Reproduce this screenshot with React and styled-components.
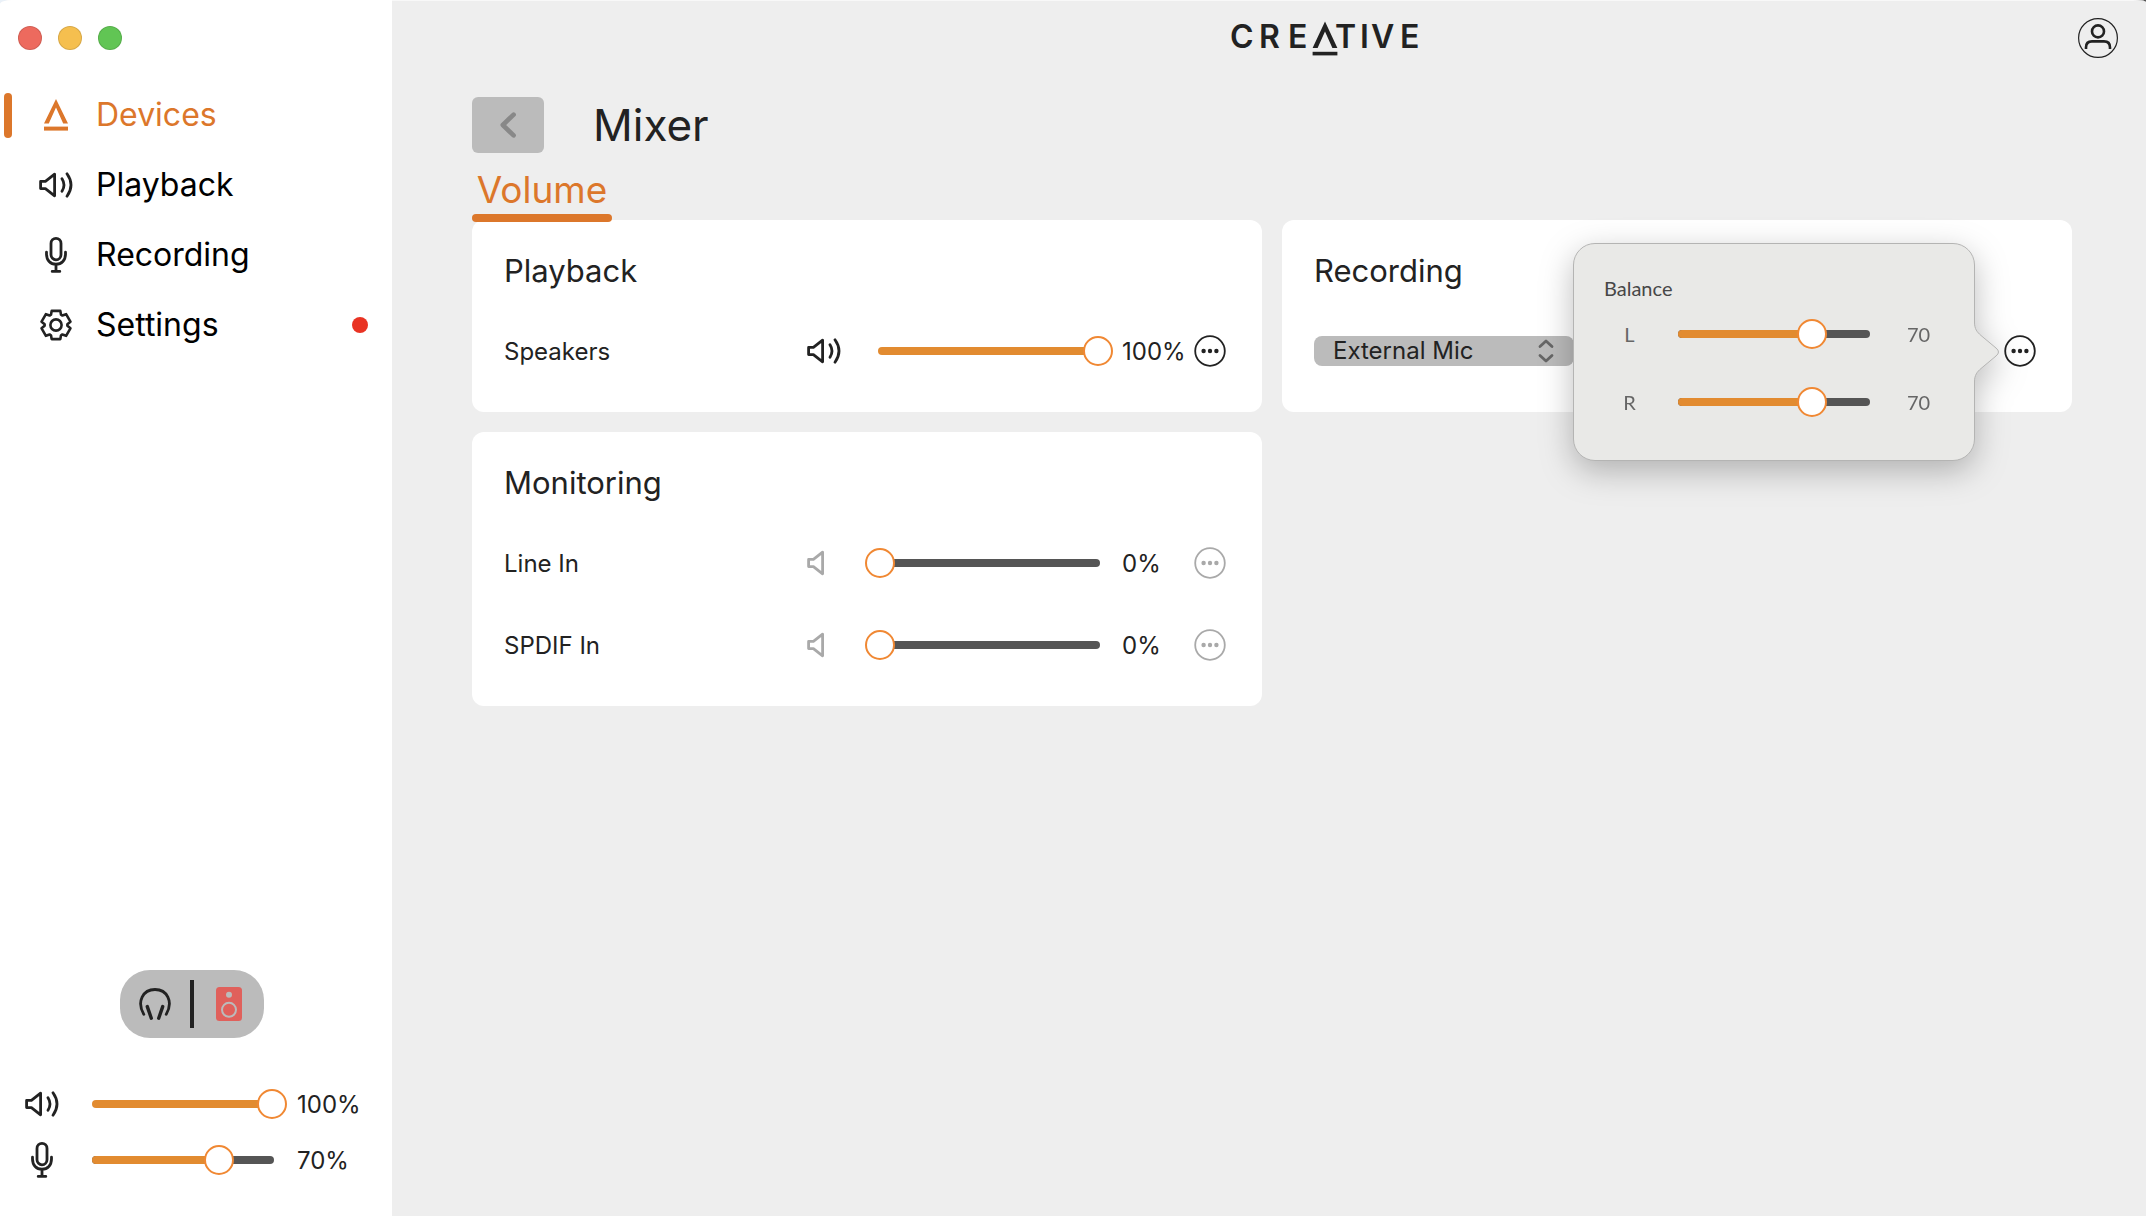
import React, { useState } from "react"
import styled, { createGlobalStyle } from "styled-components"

const ink = "#222222"
const accent = "#dc772b"
const muted = "#a9a9a9"

const GlobalStyle = createGlobalStyle`
  * {
    box-sizing: border-box;
  }
  body {
    margin: 0;
    background: linear-gradient(90deg, #eaf1f8 50%, #555555 50%);
    color: ${ink};
    font-family: Inter, "Liberation Sans", sans-serif;
  }
  button {
    font: inherit;
    color: inherit;
    border: 0;
    padding: 0;
    background: none;
    cursor: pointer;
  }
  svg {
    display: block;
  }
`

const Window = styled.div`
  display: flex;
  min-height: 100vh;
  overflow: hidden;
  border-radius: 12px 14px 0 0 / 4px 2px 0 0;
  background: #eeeeee;
`

/* sidebar */

const Sidebar = styled.aside`
  display: flex;
  flex-direction: column;
  flex: 0 0 392px;
  padding: 26px 0 28px;
  background: #ffffff;
`

const Lights = styled.div`
  display: flex;
  gap: 16px;
  padding-left: 18px;
`

const Light = styled.button`
  width: 24px;
  height: 24px;
  border: 1px solid rgba(0, 0, 0, 0.12);
  border-radius: 50%;
  background: ${(props) => props.$color};
`

const Nav = styled.nav`
  display: flex;
  flex-direction: column;
  margin-top: 30px;
`

const NavLink = styled.a`
  display: flex;
  align-items: center;
  height: 70px;
  padding: 0 24px 0 4px;
  color: ${(props) => (props.$active ? accent : "#000000")};
  font-size: 32px;
  line-height: 38px;
  text-decoration: none;

  &::before {
    content: "";
    width: 8px;
    height: 45px;
    border-radius: 4px;
    background: ${(props) => (props.$active ? accent : "transparent")};
  }
`

const NavIcon = styled.span`
  display: grid;
  place-items: center;
  width: 36px;
  margin: 0 22px 0 26px;
  color: ${(props) => (props.$active ? accent : ink)};
`

const Dot = styled.span`
  width: 16px;
  height: 16px;
  margin-left: auto;
  border-radius: 50%;
  background: #e93323;
`

const Output = styled.div`
  display: flex;
  align-items: center;
  align-self: center;
  width: 144px;
  height: 68px;
  margin: auto 8px 38px 0;
  border-radius: 30px;
  background: #bbbbbb;
`

const OutputButton = styled.button`
  display: grid;
  flex: 1;
  place-items: center;
`

const Divider = styled.span`
  width: 4px;
  height: 48px;
  background: ${ink};
`

const Master = styled.div`
  display: grid;
  grid-template-columns: 55px 218px 1fr;
  align-items: center;
  height: 56px;
  padding-left: 24px;
`

const MasterIcon = styled.span`
  display: grid;
  place-items: center;
  width: 36px;
`

const Percent = styled.output`
  font-size: 24px;
`

/* slider */

const SliderBox = styled.div`
  display: grid;
  align-items: center;
  width: ${(props) => props.$width}px;

  > * {
    grid-area: 1 / 1;
  }
`

const Track = styled.div`
  height: 8px;
  margin: 0 13px;
  overflow: hidden;
  border-radius: 4px;
  background: #555555;
`

const Fill = styled.div`
  height: 100%;
  background: #e28b30;
`

const Range = styled.input`
  width: 100%;
  height: 30px;
  margin: 0;
  appearance: none;
  background: none;
  cursor: pointer;

  &::-webkit-slider-thumb {
    width: 30px;
    height: 30px;
    appearance: none;
    border: 2px solid #f08833;
    border-radius: 50%;
    background: #ffffff;
  }
`

/* main area */

const Main = styled.main`
  flex: 1;
  border-top: 1px solid #f8f8f8;
`

const Header = styled.header`
  display: grid;
  grid-template-columns: 1fr auto 1fr;
  grid-template-rows: 40px;
  align-items: center;
  padding: 17px 28px 0 142px;
`

const Account = styled.button`
  grid-column: 3;
  justify-self: end;
`

const Brand = styled.a`
  grid-column: 2;
  color: ${ink};
`

const Content = styled.div`
  padding: 39px 74px 40px 80px;
`

const TitleRow = styled.div`
  display: flex;
  align-items: center;
  gap: 49px;
`

const Back = styled.button`
  display: grid;
  place-items: center;
  width: 72px;
  height: 56px;
  border-radius: 6px;
  background: #bbbbbb;
`

const Title = styled.h1`
  margin: 0;
  font-size: 44px;
  font-weight: 400;
  line-height: 56px;
`

const Tab = styled.button`
  display: block;
  position: relative;
  margin: 13px 0 -2px;
  color: ${accent};
  font-size: 37px;
  line-height: 48px;

  &::after {
    content: "";
    display: block;
    width: 140px;
    height: 8px;
    border-radius: 4px;
    background: ${accent};
  }
`

const Cards = styled.div`
  display: grid;
  grid-template-columns: 1fr 1fr;
  align-items: start;
  gap: 20px;
`

const Card = styled.section`
  padding: 16px 36px 20px 32px;
  border-radius: 12px;
  background: #ffffff;
`

const CardTitle = styled.h2`
  margin: 0 0 4px;
  font-size: 31px;
  font-weight: 400;
  line-height: 70px;
`

const Channel = styled.div`
  display: grid;
  grid-template-columns: 1fr 59px 257px 72px 32px;
  align-items: center;
  height: 82px;
  font-size: 24px;
`

const InputRow = styled.div`
  display: flex;
  align-items: center;
  justify-content: space-between;
  height: 82px;
`

const IconButton = styled.button`
  justify-self: start;
  color: ${(props) => (props.$off ? muted : ink)};
`

const SelectBox = styled.div`
  display: grid;
  grid-template-columns: 1fr 36px;
  align-items: center;
  width: 260px;

  > svg {
    grid-area: 1 / 2;
    pointer-events: none;
  }
`

const Select = styled.select`
  grid-area: 1 / 1 / 2 / 3;
  height: 30px;
  padding: 0 40px 0 19px;
  appearance: none;
  border: 0;
  border-radius: 8px;
  background: #bbbbbb;
  color: ${ink};
  font-family: inherit;
  font-size: 24px;
  line-height: 30px;
`

const MoreAnchor = styled.div`
  display: grid;
  position: relative;
`

const Popover = styled.div`
  position: absolute;
  top: -92px;
  right: 61px;
  z-index: 2;
  width: 402px;
  padding: 28px 0 40px;
  border: 1px solid #b4b4b3;
  border-radius: 22px;
  background: #e9e9e7;
  color: #666666;
  font-family: Lato, "Open Sans", sans-serif;
  font-size: 20px;
  filter: drop-shadow(0 10px 16px rgba(0, 0, 0, 0.26));
`

const PopoverArrow = styled.svg`
  position: absolute;
  top: 78px;
  left: 399px;
`

const PopoverTitle = styled.h3`
  margin: 0 30px 12px;
  color: #474747;
  font-size: 20px;
  font-weight: 400;
  line-height: 32px;
`

const BalanceRow = styled.div`
  display: grid;
  grid-template-columns: 91px 218px 1fr;
  align-items: center;
  height: 36px;

  & + & {
    margin-top: 32px;
  }
`

const BalanceLabel = styled.label`
  padding-left: 20px;
  text-align: center;
`

const BalanceValue = styled.output`
  padding-left: 24px;
`

const SpeakerIcon = ({ silent }) => (
  <svg width="36" height="26" viewBox="-1 0 36 26" fill="none" stroke="currentColor" strokeWidth="2.8" strokeLinecap="round" strokeLinejoin="round">
    <path d="M1.6 9.4H6.4L15.6 2.2V23.8L6.4 16.6H1.6Z" />
    {silent ? null : <path d="M23 6.8Q27 13 23 19.2M28 1.8Q36 13 28 24.2" />}
  </svg>
)

const MicIcon = () => (
  <svg width="22" height="36" viewBox="0 0 22 36" fill="none" stroke="currentColor" strokeWidth="2.8" strokeLinecap="round" strokeLinejoin="round">
    <rect x="6" y="1.4" width="10" height="21.4" rx="5" />
    <path d="M1.5 15.2V17C1.5 23.2 5.4 27.2 11 27.2S20.5 23.2 20.5 17V15.2M11 27.2V34M7.2 34.4H14.8" />
  </svg>
)

const BrandMark = () => (
  <svg width="24" height="32" viewBox="0 0 24 32" fill="currentColor">
    <path d="M12 0L24 24.4H19.2L12 8.6L4.8 24.4H0Z" />
    <rect y="27.6" width="24" height="4" />
  </svg>
)

// six flat teeth, one every 60 degrees
const gearPoints = [0, 60, 120, 180, 240, 300]
  .flatMap((turn) => [
    [turn - 26, 11.4],
    [turn - 17, 14.8],
    [turn + 17, 14.8],
    [turn + 26, 11.4],
  ])
  .map(([angle, r]) => {
    const a = (angle * Math.PI) / 180
    return `${(16 + r * Math.sin(a)).toFixed(2)},${(16 - r * Math.cos(a)).toFixed(2)}`
  })
  .join(" ")

const GearIcon = () => (
  <svg width="32" height="32" viewBox="0 0 32 32" fill="none" stroke="currentColor" strokeWidth="2.6" strokeLinejoin="round">
    <polygon points={gearPoints} />
    <circle cx="16" cy="16" r="5.6" />
  </svg>
)

const HeadphonesIcon = () => (
  <svg width="32" height="32" viewBox="0 0 32 32" fill="none" stroke={ink} strokeWidth="2.8" strokeLinecap="round">
    <path d="M4.8 26.4C-2.6 13.5 4 1.5 16 1.5S34.6 13.5 27.2 26.4" />
    <path d="M8.3 18.6L12.3 30.2M23.7 18.6L19.7 30.2" strokeWidth="3.4" />
  </svg>
)

const CabinetIcon = () => (
  <svg width="26" height="34" viewBox="0 0 26 34">
    <rect width="26" height="34" rx="3.5" fill="#e0605b" />
    <circle cx="13" cy="7.7" r="3" fill="#bbbbbb" />
    <circle cx="13" cy="22.8" r="7" fill="none" stroke="#bbbbbb" strokeWidth="2" />
  </svg>
)

const MoreIcon = () => (
  <svg width="32" height="32" viewBox="0 0 32 32" fill="currentColor">
    <circle cx="16" cy="16" r="14.8" fill="none" stroke="currentColor" strokeWidth="1.8" />
    <circle cx="9.6" cy="16" r="2.2" />
    <circle cx="16" cy="16" r="2.2" />
    <circle cx="22.4" cy="16" r="2.2" />
  </svg>
)

const AccountIcon = () => (
  <svg width="40" height="40" viewBox="0 0 40 40" fill="none" stroke={ink} strokeWidth="2.6">
    <circle cx="20" cy="20" r="19.4" strokeWidth="1.2" />
    <circle cx="20" cy="13.4" r="6" />
    <path d="M8 31V29.4C8 25.6 10.4 23.4 14 23.4H26C29.6 23.4 32 25.6 32 29.4V31" />
  </svg>
)

const Logo = () => (
  <svg width="194" height="50" viewBox="-2 -8 194 50" fill="currentColor">
    <g fontFamily="Inter, sans-serif" fontSize="32" fontWeight="600">
      <text x="-1 28 57" y="27">CRE</text>
      <text x="104 129 140 169" y="27">TIVE</text>
    </g>
    <path d="M94 .4L106.4 27H101.4L94 10.4L86.6 27H81.6Z" />
    <rect x="81.6" y="30.8" width="24.8" height="3.6" />
  </svg>
)

const Slider = ({ value, onChange, label, id, width = 248 }) => (
  <SliderBox $width={width}>
    <Track>
      <Fill style={{ width: `${value}%` }} />
    </Track>
    <Range
      type="range"
      min="0"
      max="100"
      id={id}
      aria-label={label}
      value={value}
      onChange={(e) => onChange(Number(e.target.value))}
    />
  </SliderBox>
)

const links = [
  { name: "Devices", icon: <BrandMark />, active: true },
  { name: "Playback", icon: <SpeakerIcon /> },
  { name: "Recording", icon: <MicIcon /> },
  { name: "Settings", icon: <GearIcon />, alert: true },
]

const MasterVolume = ({ icon, label, initial }) => {
  const [value, setValue] = useState(initial)
  return (
    <Master>
      <MasterIcon>{icon}</MasterIcon>
      <Slider label={label} value={value} onChange={setValue} width={208} />
      <Percent>{value}%</Percent>
    </Master>
  )
}

const MixerChannel = ({ name, initial }) => {
  const [value, setValue] = useState(initial)
  const off = value === 0
  const id = `channel-${name.toLowerCase().replace(" ", "-")}`
  return (
    <Channel>
      <label htmlFor={id}>{name}</label>
      <IconButton $off={off} aria-label={`Mute ${name}`}>
        <SpeakerIcon silent={off} />
      </IconButton>
      <Slider id={id} value={value} onChange={setValue} />
      <Percent>{value}%</Percent>
      <IconButton $off={off} aria-label={`${name} options`}>
        <MoreIcon />
      </IconButton>
    </Channel>
  )
}

const BalanceSide = ({ side }) => {
  const [value, setValue] = useState(70)
  return (
    <BalanceRow>
      <BalanceLabel htmlFor={`balance-${side}`}>{side}</BalanceLabel>
      <Slider id={`balance-${side}`} value={value} onChange={setValue} width={218} />
      <BalanceValue>{value}</BalanceValue>
    </BalanceRow>
  )
}

const App = () => {
  return (
    <>
      <GlobalStyle />
      <Window>
        <Sidebar>
          <Lights>
            <Light $color="#ed6a5e" aria-label="Close" />
            <Light $color="#f5bf4f" aria-label="Minimize" />
            <Light $color="#61c554" aria-label="Zoom" />
          </Lights>
          <Nav>
            {links.map(({ name, icon, active, alert }) => (
              <NavLink href={`#${name.toLowerCase()}`} key={name} $active={active}>
                <NavIcon $active={active}>{icon}</NavIcon>
                {name}
                {alert ? <Dot /> : null}
              </NavLink>
            ))}
          </Nav>
          <Output>
            <OutputButton aria-label="Headphones">
              <HeadphonesIcon />
            </OutputButton>
            <Divider />
            <OutputButton aria-label="Speakers">
              <CabinetIcon />
            </OutputButton>
          </Output>
          <MasterVolume icon={<SpeakerIcon />} label="Output volume" initial={100} />
          <MasterVolume icon={<MicIcon />} label="Input volume" initial={70} />
        </Sidebar>
        <Main>
          <Header>
            <Brand href="#home" aria-label="Creative">
              <Logo />
            </Brand>
            <Account aria-label="Account">
              <AccountIcon />
            </Account>
          </Header>
          <Content>
            <TitleRow>
              <Back aria-label="Back">
                <svg width="16" height="26" viewBox="0 0 16 26" fill="none" stroke="#888888" strokeWidth="4.6" strokeLinecap="round" strokeLinejoin="round">
                  <path d="M13.6 2.6L2.8 13L13.6 23.4" />
                </svg>
              </Back>
              <Title>Mixer</Title>
            </TitleRow>
            <Tab>Volume</Tab>
            <Cards>
              <Card>
                <CardTitle>Playback</CardTitle>
                <MixerChannel name="Speakers" initial={100} />
              </Card>
              <Card>
                <CardTitle>Recording</CardTitle>
                <InputRow>
                  <SelectBox>
                    <Select aria-label="Recording source">
                      <option>External Mic</option>
                    </Select>
                    <svg width="16" height="26" viewBox="0 0 16 26" fill="none" stroke="#666666" strokeWidth="2.8" strokeLinecap="round" strokeLinejoin="round">
                      <path d="M2 8.6L8 3L14 8.6M2 17.4L8 23L14 17.4" />
                    </svg>
                  </SelectBox>
                  <MoreAnchor>
                    <IconButton aria-label="Recording options">
                      <MoreIcon />
                    </IconButton>
                    <Popover role="dialog" aria-label="Balance">
                      <PopoverTitle>Balance</PopoverTitle>
                      <BalanceSide side="L" />
                      <BalanceSide side="R" />
                      <PopoverArrow width="28" height="60" viewBox="0 0 28 60">
                        <path d="M0 0H1.5C1.5 7 4 10 8 13.5L23 26Q28 30 23 34L8 46.5C4 50 1.5 53 1.5 60H0Z" fill="#e9e9e7" />
                        <path d="M1.5 0C1.5 7 4 10 8 13.5L23 26Q28 30 23 34L8 46.5C4 50 1.5 53 1.5 60" fill="none" stroke="#b4b4b3" />
                      </PopoverArrow>
                    </Popover>
                  </MoreAnchor>
                </InputRow>
              </Card>
              <Card>
                <CardTitle>Monitoring</CardTitle>
                <MixerChannel name="Line In" initial={0} />
                <MixerChannel name="SPDIF In" initial={0} />
              </Card>
            </Cards>
          </Content>
        </Main>
      </Window>
    </>
  )
}

export default App
